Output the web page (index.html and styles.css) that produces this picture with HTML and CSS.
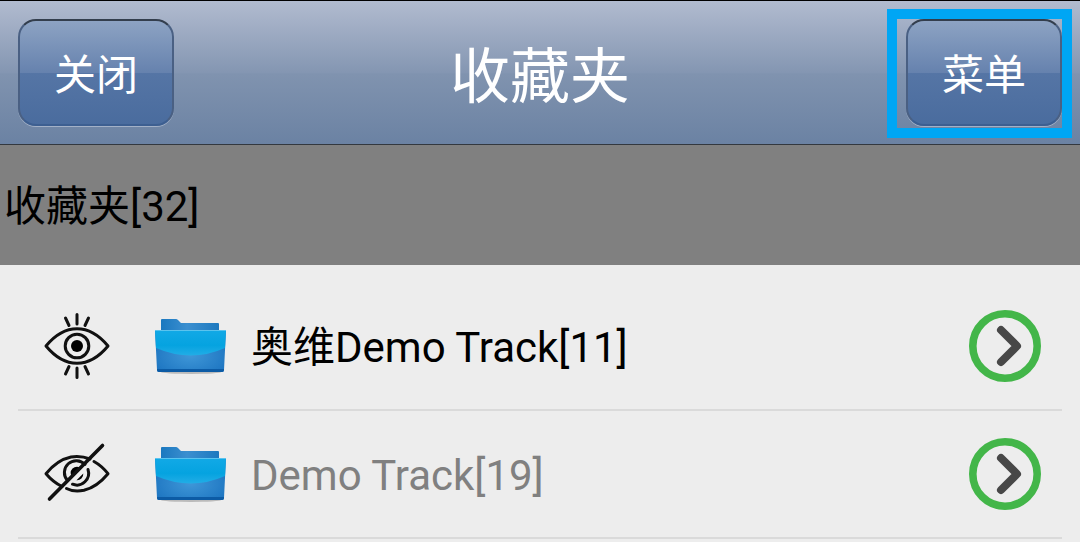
FILE: index.html
```html
<!DOCTYPE html>
<html lang="zh-CN">
<head>
<meta charset="utf-8">
<meta name="viewport" content="width=device-width, initial-scale=1">
<title>收藏夹</title>
<link rel="stylesheet" href="styles.css">
</head>
<body>
<svg class="defs" aria-hidden="true">
  <defs>
    <linearGradient id="folder-back" x1="0" y1="0" x2="1" y2="0">
      <stop offset="0" stop-color="#1b78bf"/><stop offset=".45" stop-color="#3b8fd0"/><stop offset="1" stop-color="#1d79bf"/>
    </linearGradient>
    <radialGradient id="folder-front" cx=".5" cy=".6" r=".6">
      <stop offset="0" stop-color="#3f97d8"/><stop offset="1" stop-color="#1c74c0"/>
    </radialGradient>
    <linearGradient id="folder-shine" x1="0" y1="0" x2="0" y2="1">
      <stop offset="0" stop-color="#12a9e6"/><stop offset=".6" stop-color="#05a3e0"/><stop offset="1" stop-color="#22ade6"/>
    </linearGradient>
    <symbol id="folder" viewBox="0 0 72 58">
      <ellipse cx="36" cy="55" rx="30" ry="2" fill="#999" opacity=".6"/>
      <path d="M6 14V3Q6 2 7 2H21Q22 2 23 3L26 6H63Q64 6 64 7V14Z" fill="url(#folder-back)"/>
      <path d="M0 13H71L69 53Q69 55 67 55H4Q2 55 2 53Z" fill="url(#folder-front)"/>
      <path d="M0 13H71L70 31Q36 46 1 31Z" fill="url(#folder-shine)"/>
      <path d="M0 13.500H71" stroke="#5ac3ee" fill="none"/>
      <path d="M2 52H69V53Q69 55 67 55H4Q2 55 2 53Z" fill="#0c5ba5"/>
    </symbol>
    <symbol id="arrow" viewBox="0 0 72 72">
      <circle cx="36" cy="36" r="32.2" fill="none" stroke="#43b649" stroke-width="7.6"/>
      <path d="M32 20L48 36L32 52" fill="none" stroke="#484848" stroke-width="8" stroke-linecap="round" stroke-linejoin="round"/>
    </symbol>
  </defs>
</svg>

<header class="navbar">
  <button class="nav-button" type="button">关闭</button>
  <h1 class="title">收藏夹</h1>
  <div class="menu-slot">
    <button class="nav-button" type="button">菜单</button>
    <span class="highlight"></span>
  </div>
</header>

<main>
  <h2 class="section">收藏夹[32]</h2>
  <ul class="list">
    <li class="row">
      <button class="icon-button" type="button" aria-label="隐藏">
        <svg class="eye" viewBox="0 0 66 66">
          <g fill="none" stroke="#111" stroke-width="3" stroke-linecap="round" stroke-linejoin="round">
            <path d="M2 33C21 10 45 10 64 33C45 56 21 56 2 33Z"/>
            <circle cx="33" cy="33" r="11.8"/>
            <path d="M33 1.500V11M21.500 5L25 12.500M44.500 5L41 12.500M33 55V64.500M21.500 61L25 53.500M44.500 61L41 53.500"/>
          </g>
          <circle cx="33" cy="33" r="6" fill="#000"/>
        </svg>
      </button>
      <svg class="folder" aria-hidden="true"><use href="#folder"/></svg>
      <span class="name">奥维Demo Track[11]</span>
      <button class="icon-button" type="button" aria-label="打开"><svg class="arrow"><use href="#arrow"/></svg></button>
    </li>
    <li class="row">
      <button class="icon-button" type="button" aria-label="显示">
        <svg class="eye" viewBox="0 0 66 66">
          <g fill="none" stroke="#111" stroke-width="3" stroke-linecap="round" stroke-linejoin="round">
            <path d="M46 18Q37 14.500 27 16Q13 19 2 32.700Q9 41 18 45.500"/>
            <path d="M50 20.500Q58 25 64 32.700Q53 46 40 49.300Q30 51.500 22.500 47.500"/>
            <path d="M41 23.500A11.800 11.800 0 0 0 23.500 39.500"/>
            <path d="M44 28.500A11.800 11.800 0 0 1 28.500 43.200"/>
          </g>
          <path d="M37.500 27.500L28.500 36.500A6.300 6.300 0 0 1 37.500 27.500ZM39.300 32.500A6.300 6.300 0 0 1 32.500 39.200Z" fill="#000"/>
          <path d="M5.500 58L58.500 4.500" stroke="#111" stroke-width="3.600" stroke-linecap="round"/>
        </svg>
      </button>
      <svg class="folder" aria-hidden="true"><use href="#folder"/></svg>
      <span class="name muted">Demo Track[19]</span>
      <button class="icon-button" type="button" aria-label="打开"><svg class="arrow"><use href="#arrow"/></svg></button>
    </li>
  </ul>
</main>
</body>
</html>
```
FILE: styles.css
```css
* {
  box-sizing: border-box;
}

body {
  margin: 0;
  min-height: 100vh;
  background: #ededed;
  color: #000;
  font-family: Roboto, "Noto Sans CJK SC", sans-serif;
  font-size: 42px;
}

.defs {
  position: absolute;
  width: 0;
  height: 0;
}

.navbar {
  display: flex;
  align-items: center;
  justify-content: space-between;
  padding: 18px;
  border-top: 1px solid #000;
  border-bottom: 1px solid #33383f;
  background: linear-gradient(#b1bbcf, #8496b2 50%, #8093af 51%, #6b82a3);
}

.nav-button {
  display: block;
  width: 156px;
  height: 107px;
  padding: 6px 0 0;
  border: 2px solid #4a6083;
  border-top-color: #333e4d;
  border-bottom-color: #3d5f91;
  border-radius: 18px;
  background: linear-gradient(#8da3c3, #6682ae 50%, #5575a5 51%, #4a6c9e);
  box-shadow: 0 1px 0 #a3b1c7;
  color: #fff;
  font-family: inherit;
  font-size: 42px;
  line-height: 60px;
}

.title {
  margin: 0;
  padding-top: 10px;
  color: #fff;
  font-size: 60px;
  font-weight: 400;
  line-height: 88px;
}

.menu-slot {
  position: relative;
}

.highlight {
  position: absolute;
  inset: -10px -10px -12px -19px;
  border: 10px solid #00a6f4;
  pointer-events: none;
}

.section {
  margin: 0;
  padding: 32px 4px 28px;
  background: #808080;
  font-size: 42px;
  font-weight: 400;
  line-height: 60px;
}

.list {
  margin: 0;
  padding: 18px 18px 0;
  list-style: none;
}

.row {
  display: flex;
  align-items: center;
  min-height: 128px;
  padding: 0 21px 0 26px;
  border-bottom: 2px solid #dadada;
}

.icon-button {
  flex: none;
  padding: 0;
  border: 0;
  background: none;
}

.icon-button svg {
  display: block;
}

.eye {
  width: 66px;
  height: 66px;
}

.folder {
  flex: none;
  width: 72px;
  height: 58px;
  margin: 0 24px 0 45px;
}

.arrow {
  width: 72px;
  height: 72px;
}

.name {
  flex: 1;
  padding-top: 4px;
  line-height: 60px;
}

.muted {
  color: #808080;
}
```
